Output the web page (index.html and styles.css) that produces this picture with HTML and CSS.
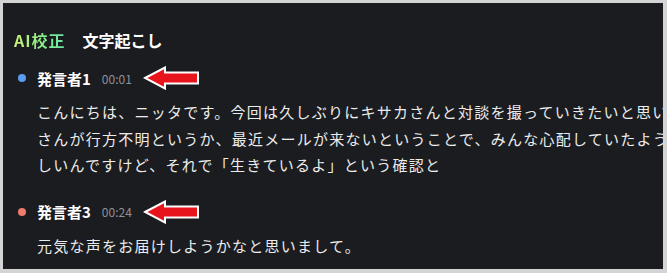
FILE: index.html
```html
<!DOCTYPE html>
<html lang="ja">
<head>
<meta charset="utf-8">
<link rel="stylesheet" href="styles.css">
</head>
<body>
<div class="frame">
  <div class="panel">
    <div class="head">
      <span class="ai">AI校正</span>
      <span class="title">文字起こし</span>
    </div>

    <div class="speaker">
      <span class="dot blue"></span>
      <span class="name">発言者1</span>
      <span class="time">00:01</span>
      <svg class="arrow" width="58" height="24" viewBox="0 0 58 24">
        <polygon points="2,12 22,1.5 22,6.5 55,6.5 55,17.5 22,17.5 22,22.5" fill="#e8141c" stroke="#ffffff" stroke-width="2" stroke-linejoin="miter"/>
      </svg>
    </div>
    <div class="text">
      <span class="line">こんにちは、ニッタです。今回は久しぶりにキサカさんと対談を撮っていきたいと思います。キサカ</span>
      <span class="line">さんが行方不明というか、最近メールが来ないということで、みんな心配していたようで嬉</span>
      <span class="line">しいんですけど、それで「生きているよ」という確認と</span>
    </div>

    <div class="speaker s3">
      <span class="dot salmon"></span>
      <span class="name">発言者3</span>
      <span class="time">00:24</span>
      <svg class="arrow" width="58" height="24" viewBox="0 0 58 24">
        <polygon points="2,12 22,1.5 22,6.5 55,6.5 55,17.5 22,17.5 22,22.5" fill="#e8141c" stroke="#ffffff" stroke-width="2" stroke-linejoin="miter"/>
      </svg>
    </div>
    <div class="text">
      <span class="line">元気な声をお届けしようかなと思いまして。</span>
    </div>
  </div>
</div>
</body>
</html>
```

FILE: styles.css
```css
html, body {
  margin: 0;
  padding: 0;
  background: #d4d4d4;
}
.frame {
  width: 667px;
  height: 273px;
  box-sizing: border-box;
  border-style: solid;
  border-color: #d4d4d4;
  border-width: 3px 4px 4px 3px;
  overflow: hidden;
}
.panel {
  height: 100%;
  background: #1b1c20;
  padding: 27px 0 0 11px;
  box-sizing: border-box;
  font-family: "Noto Sans CJK JP", "Noto Sans", sans-serif;
  color: #ececec;
  overflow: hidden;
}
.head {
  display: flex;
  align-items: center;
  gap: 17px;
  height: 20px;
  font-size: 16px;
  font-weight: 700;
  line-height: 20px;
}
.ai {
  background: linear-gradient(90deg, #cdf27a 0%, #8fee88 50%, #66e6a8 100%);
  -webkit-background-clip: text;
  background-clip: text;
  color: transparent;
  letter-spacing: 1px;
}
.title {
  color: #ffffff;
}
.speaker {
  display: flex;
  align-items: center;
  height: 24px;
  margin-top: 16px;
  padding-left: 4px;
}
.speaker.s3 {
  margin-top: 21px;
}
.dot {
  width: 8px;
  height: 8px;
  border-radius: 50%;
  margin-right: 11px;
}
.dot.blue { background: #5b9cf0; }
.dot.salmon { background: #f07a6c; }
.name {
  font-size: 15px;
  font-weight: 700;
  color: #ffffff;
}
.time {
  font-size: 12px;
  color: #909094;
  margin-left: 11px;
}
.arrow {
  margin-left: 11px;
  display: block;
}
.text {
  margin-top: 9px;
  padding-left: 23px;
  font-size: 15px;
  line-height: 26.5px;
  letter-spacing: 1.25px;
  color: #ececec;
}
.line {
  display: block;
  white-space: nowrap;
}
```
